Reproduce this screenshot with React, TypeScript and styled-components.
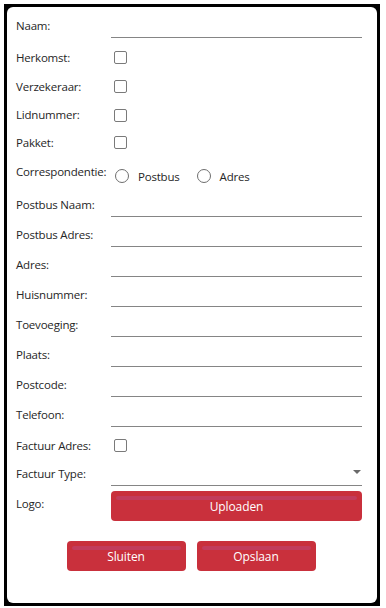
import React from 'react';
import styled, { createGlobalStyle } from 'styled-components';

const GlobalStyle = createGlobalStyle`
  html, body {
    margin: 0;
    background: #fff;
  }
  body {
    font-family: "Open Sans", "Noto Sans", sans-serif;
  }
`;

const Frame = styled.div`
  margin: 4px 0 0 4px;
  width: 376px;
  height: 602px;
  box-sizing: border-box;
  background: #000;
  padding: 3px;
`;

const Panel = styled.div`
  height: 100%;
  box-sizing: border-box;
  background: #fff;
  border-radius: 6px;
  padding: 1px 15px 0 9px;
  display: flex;
  flex-direction: column;
`;

const Row = styled.div<{ $h: number; $mt?: number }>`
  display: grid;
  grid-template-columns: 95px 1fr;
  height: ${(p) => p.$h}px;
  margin-top: ${(p) => p.$mt ?? 0}px;
`;

const Label = styled.span<{ $align: 'start' | 'center' | 'end' }>`
  align-self: ${(p) => p.$align};
  font-size: 11.5px;
  letter-spacing: -0.2px;
  line-height: 16px;
  color: #262626;
  white-space: nowrap;
  margin-bottom: ${(p) => (p.$align === 'end' ? 4 : 0)}px;
  margin-top: ${(p) => (p.$align === 'start' ? 5 : 0)}px;
`;

const TextInput = styled.input`
  height: 100%;
  box-sizing: border-box;
  border: none;
  border-bottom: 1px solid #858585;
  background: transparent;
  outline: none;
  padding: 0 2px;
  font: inherit;
  font-size: 11.5px;
`;

const Check = styled.span`
  align-self: center;
  width: 13px;
  height: 13px;
  box-sizing: border-box;
  margin-left: 3px;
  border: 1px solid #7a7a7a;
  border-radius: 2px;
  background: #fff;
`;

const RadioGroup = styled.div`
  display: flex;
  align-items: center;
  gap: 17px;
  padding: 9px 0 0 4px;
`;

const RadioItem = styled.label`
  display: flex;
  align-items: center;
  gap: 9px;
  font-size: 11.5px;
  letter-spacing: -0.2px;
  color: #262626;
`;

const RadioCircle = styled.span`
  width: 14px;
  height: 14px;
  box-sizing: border-box;
  border: 1px solid #6e6e6e;
  border-radius: 50%;
`;

const Select = styled.div`
  display: flex;
  align-items: center;
  justify-content: flex-end;
  border-bottom: 1px solid #858585;
  padding: 0 1px 2px 0;
`;

const Arrow = styled.span`
  width: 0;
  height: 0;
  border-left: 4px solid transparent;
  border-right: 4px solid transparent;
  border-top: 4px solid #6a6a6a;
`;

const RedButton = styled.button<{ $w?: number }>`
  position: relative;
  width: ${(p) => (p.$w ? `${p.$w}px` : '100%')};
  height: 30px;
  border: none;
  border-radius: 4px;
  background: #c9303c;
  color: #fff;
  font-family: inherit;
  font-size: 12px;
  letter-spacing: -0.1px;
  padding: 0;
  cursor: pointer;

  &::before {
    content: '';
    position: absolute;
    left: 5px;
    right: 5px;
    top: 5px;
    height: 4px;
    border-radius: 2px;
    background: #c23c5c;
  }
`;

const Actions = styled.div`
  display: flex;
  justify-content: center;
  gap: 11px;
  margin-top: 20px;
  padding-left: 4px;
`;

const textFields = [
  'Postbus Adres:',
  'Adres:',
  'Huisnummer:',
  'Toevoeging:',
  'Plaats:',
  'Postcode:',
  'Telefoon:',
];

// label, row height
const checkFields: [string, number][] = [
  ['Herkomst:', 29],
  ['Verzekeraar:', 29],
  ['Lidnummer:', 28],
  ['Pakket:', 27],
];

export default function App() {
  return (
    <>
      <GlobalStyle />
      <Frame>
        <Panel>
          <Row $h={30}>
            <Label $align="end">Naam:</Label>
            <TextInput />
          </Row>
          {checkFields.map(([f, h], i) => (
            <Row key={f} $h={h} $mt={i === 0 ? 5 : 0}>
              <Label $align="center">{f}</Label>
              <Check />
            </Row>
          ))}
          <Row $h={31}>
            <Label $align="center">Correspondentie:</Label>
            <RadioGroup>
              <RadioItem>
                <RadioCircle />
                Postbus
              </RadioItem>
              <RadioItem>
                <RadioCircle />
                Adres
              </RadioItem>
            </RadioGroup>
          </Row>
          <Row $h={30}>
            <Label $align="end">Postbus Naam:</Label>
            <TextInput />
          </Row>
          {textFields.map((f) => (
            <Row key={f} $h={30}>
              <Label $align="end">{f}</Label>
              <TextInput />
            </Row>
          ))}
          <Row $h={29} $mt={4}>
            <Label $align="center">Factuur Adres:</Label>
            <Check />
          </Row>
          <Row $h={26}>
            <Label $align="end">Factuur Type:</Label>
            <Select>
              <Arrow />
            </Select>
          </Row>
          <Row $h={30} $mt={5}>
            <Label $align="start">Logo:</Label>
            <RedButton>Uploaden</RedButton>
          </Row>
          <Actions>
            <RedButton $w={119}>Sluiten</RedButton>
            <RedButton $w={119}>Opslaan</RedButton>
          </Actions>
        </Panel>
      </Frame>
    </>
  );
}
